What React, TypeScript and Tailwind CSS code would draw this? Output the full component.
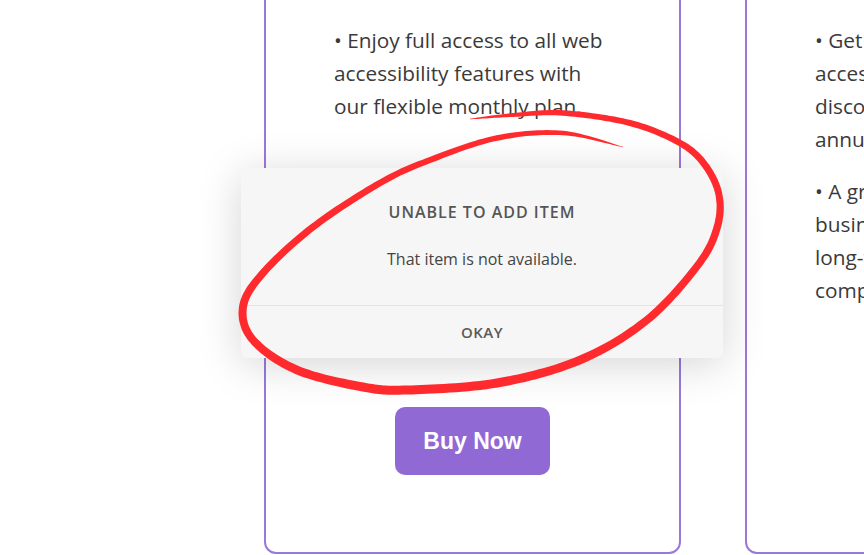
import React from "react"

type Pt = [number, number]

// hand-drawn red loop round the dialog, traced from the screenshot
const loopPoints: Pt[] = [
  [623, 147], [563, 133], [497, 138], [430, 160], [380, 183], [313, 227],
  [263, 273], [243, 307], [253, 340], [297, 370], [363, 387], [407, 390],
  [497, 383], [580, 360], [647, 320], [698, 265], [717, 228], [719, 195],
  [705, 165], [680, 143], [630, 123], [563, 113], [513, 115], [470, 119],
]
const loopWidths = [0.4, 4.5, 5.5, 6, 6.5, 7, 7.5, 8, 8, 8.5, 9, 9, 9, 8.5, 8, 7.5, 7.5, 7, 7, 6.5, 6, 5.5, 4, 0.4]

function buildStroke(points: Pt[], widths: number[]) {
  const samples: { p: Pt; w: number }[] = []
  const steps = 16
  for (let i = 0; i < points.length - 1; i++) {
    const p0 = points[Math.max(i - 1, 0)]
    const p1 = points[i]
    const p2 = points[i + 1]
    const p3 = points[Math.min(i + 2, points.length - 1)]
    for (let s = 0; s < steps; s++) {
      const t = s / steps
      const t2 = t * t
      const t3 = t2 * t
      const x =
        0.5 * (2 * p1[0] + (-p0[0] + p2[0]) * t + (2 * p0[0] - 5 * p1[0] + 4 * p2[0] - p3[0]) * t2 + (-p0[0] + 3 * p1[0] - 3 * p2[0] + p3[0]) * t3)
      const y =
        0.5 * (2 * p1[1] + (-p0[1] + p2[1]) * t + (2 * p0[1] - 5 * p1[1] + 4 * p2[1] - p3[1]) * t2 + (-p0[1] + 3 * p1[1] - 3 * p2[1] + p3[1]) * t3)
      samples.push({ p: [x, y], w: widths[i] + (widths[i + 1] - widths[i]) * t })
    }
  }
  samples.push({ p: points[points.length - 1], w: widths[widths.length - 1] })

  const left: Pt[] = []
  const right: Pt[] = []
  samples.forEach((s, i) => {
    const a = samples[Math.max(i - 1, 0)].p
    const b = samples[Math.min(i + 1, samples.length - 1)].p
    const dx = b[0] - a[0]
    const dy = b[1] - a[1]
    const len = Math.hypot(dx, dy) || 1
    const nx = -dy / len
    const ny = dx / len
    const h = s.w / 2
    left.push([s.p[0] + nx * h, s.p[1] + ny * h])
    right.push([s.p[0] - nx * h, s.p[1] - ny * h])
  })
  const outline = [...left, ...right.reverse()]
  return "M" + outline.map((p) => `${p[0].toFixed(1)} ${p[1].toFixed(1)}`).join(" L") + " Z"
}

const bodyFont = { fontFamily: "'Open Sans', Lato, sans-serif" }

function PlanCard({ children, button }: { children: React.ReactNode; button?: boolean }) {
  return (
    <div className="-mt-5 flex h-[574px] w-[417px] shrink-0 flex-col rounded-xl border-2 border-[#9a78d9] bg-white pb-[77px] pt-[42px]">
      <div className="pl-[68px] pr-4 text-[20.8px] leading-[33px] text-[#3a3a3a]" style={bodyFont}>
        {children}
      </div>
      {button && (
        <button
          className="mt-auto h-[68px] w-[155px] self-center rounded-[10px] bg-[#9069d5] text-[23px] font-bold text-white"
          style={{ fontFamily: "'Liberation Sans', Arial, sans-serif" }}
        >
          Buy Now
        </button>
      )}
    </div>
  )
}

export default function App() {
  const strokePath = buildStroke(loopPoints, loopWidths)

  return (
    <div className="relative h-[555px] w-[864px] overflow-hidden bg-white">
      <div className="flex gap-[64px] pl-[264px]">
        <PlanCard button>
          <p className="whitespace-nowrap">
            • Enjoy full access to all web
            <br />
            accessibility features with
            <br />
            our flexible monthly plan.
          </p>
          <p className="mt-[36px] whitespace-nowrap">
            • Ideal for individuals and
            <br />
            small teams who want to
            <br />
            stay compliant month by
            <br />
            month.
          </p>
        </PlanCard>
        <PlanCard>
          <p className="whitespace-nowrap">
            • Get complete
            <br />
            access with a
            <br />
            discounted
            <br />
            annual plan.
          </p>
          <p className="mt-[19px] whitespace-nowrap">
            • A great choice for
            <br />
            businesses seeking
            <br />
            long-term
            <br />
            compliance.
          </p>
        </PlanCard>
      </div>

      {/* alert dialog */}
      <div
        className="absolute left-[241px] top-[168px] flex h-[190px] w-[482px] flex-col rounded-md bg-[#f6f6f6] shadow-[0_6px_44px_rgba(0,0,0,0.17)]"
        style={{ fontFamily: "'Open Sans', Roboto, sans-serif" }}
      >
        <div className="flex h-[137px] flex-col items-center pt-[34px]">
          <div className="text-[16px] font-semibold leading-5 tracking-[1px] text-[#555555]">UNABLE TO ADD ITEM</div>
          <div className="mt-[27px] text-[16px] leading-5 text-[#444444]">That item is not available.</div>
        </div>
        <div className="flex flex-1 items-center justify-center border-t border-[#e4e4e4]">
          <span className="text-[15px] font-semibold tracking-[0.5px] text-[#5a5a5a]">OKAY</span>
        </div>
      </div>

      <svg className="pointer-events-none absolute inset-0" width="864" height="555" viewBox="0 0 864 555">
        <path d={strokePath} fill="#fe2a2d" />
      </svg>
    </div>
  )
}
